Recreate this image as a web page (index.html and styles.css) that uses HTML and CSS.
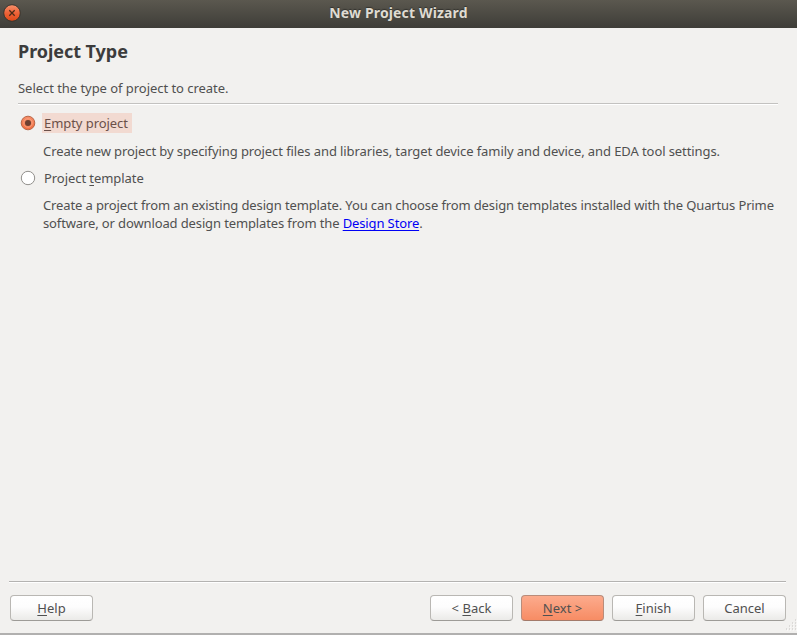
FILE: index.html
```html
<!DOCTYPE html>
<html lang="en">
<head>
<meta charset="utf-8">
<title>New Project Wizard</title>
<link rel="stylesheet" href="styles.css">
</head>
<body>
<div class="window">
  <header class="titlebar">
    <button class="close" aria-label="Close">
      <svg width="18" height="18" viewBox="0 0 18 18">
        <defs><linearGradient id="cg" x1="0" y1="0" x2="0" y2="1"><stop offset="0" stop-color="#f6916c"/><stop offset=".5" stop-color="#ed6338"/><stop offset="1" stop-color="#dc4816"/></linearGradient></defs>
        <circle cx="9" cy="9" r="8.3" fill="url(#cg)" stroke="#36352f" stroke-width="1"/>
        <path d="M6.3 6.3l5.4 5.4M11.7 6.3l-5.4 5.4" stroke="#4a2b17" stroke-width="1.3" fill="none"/>
      </svg>
    </button>
    <h1 class="caption">New Project Wizard</h1>
  </header>
  <main class="page">
    <h2 class="heading">Project Type</h2>
    <p class="intro">Select the type of project to create.</p>
    <div class="rule"></div>
    <div class="option">
      <svg class="radio" width="16" height="16" viewBox="0 0 16 16">
        <defs><linearGradient id="rg" x1="0" y1="0" x2="0" y2="1"><stop offset="0" stop-color="#f58d68"/><stop offset="1" stop-color="#f26e40"/></linearGradient></defs>
        <circle cx="8" cy="8" r="6.8" fill="url(#rg)" stroke="#b96647" stroke-width="1"/>
        <circle cx="8" cy="8" r="4.2" fill="none" stroke="#f9a98a" stroke-width=".8"/>
        <circle cx="8" cy="8" r="3" fill="#6e4031"/>
      </svg>
      <span class="label label-focus"><u>E</u>mpty project</span>
    </div>
    <p class="desc desc-empty">Create new project by specifying project files and libraries, target device family and device, and EDA tool settings.</p>
    <div class="option">
      <svg class="radio" width="16" height="16" viewBox="0 0 16 16">
        <circle cx="8" cy="8" r="6.7" fill="#fff" stroke="#92908c" stroke-width="1"/>
      </svg>
      <span class="label">Project <u>t</u>emplate</span>
    </div>
    <p class="desc desc-template">Create a project from an existing design template. You can choose from design templates installed with the Quartus Prime<br>software, or download design templates from the <a class="link">Design Store</a>.</p>
  </main>
  <footer class="footer">
    <button class="btn help"><span><u>H</u>elp</span></button>
    <button class="btn"><span>&lt; <u>B</u>ack</span></button>
    <button class="btn primary"><span><u>N</u>ext &gt;</span></button>
    <button class="btn"><span><u>F</u>inish</span></button>
    <button class="btn"><span>Cancel</span></button>
  </footer>
  <svg class="grip" width="12" height="12" viewBox="0 0 12 12"><path d="M10 1h1M7 4h1M10 4h1M4 7h1M7 7h1M10 7h1M1 10h1M4 10h1M7 10h1M10 10h1" stroke="#c5c4c2" stroke-width="1.2"/><path d="M11 2h1M8 5h1M11 5h1M5 8h1M8 8h1M11 8h1M2 11h1M5 11h1M8 11h1M11 11h1" stroke="#fff"/></svg>
</div>
</body>
</html>
```
FILE: styles.css
```css
* { box-sizing: border-box; }
body { margin: 0; font: 13px/18px "Noto Sans", sans-serif; color: #505050; }
h1, h2, p { margin: 0; }
button { font: inherit; color: inherit; padding: 0; }
u { text-decoration: underline; text-decoration-thickness: 1px; text-underline-offset: 2px; text-decoration-skip-ink: none; }

.window {
  position: relative;
  display: flex;
  flex-direction: column;
  width: 797px;
  height: 635px;
  background: #f2f1ef;
  border-bottom: 2px solid #b1b0af;
  overflow: hidden;
}

.titlebar {
  position: relative;
  display: flex;
  justify-content: center;
  height: 28px;
  background: linear-gradient(#5b584f, #3e3d38);
}
.close { position: absolute; left: 3px; top: 4px; width: 18px; height: 18px; border: 0; background: none; }
.close svg { display: block; }
.caption { font: bold 14px/26px "Noto Sans", sans-serif; letter-spacing: 0.15px; color: #dfdbd2; text-shadow: 0 -1px 1px #33322e; white-space: nowrap; }

.page { flex: 1; padding: 10px 19px 0 18px; white-space: nowrap; }
.heading { font-size: 18px; line-height: 27px; font-weight: 700; letter-spacing: -0.05px; color: #3c3c3c; }
.intro { margin-top: 14px; letter-spacing: -0.045px; }
.rule { height: 2px; margin-top: 6px; background: #c3c2c0; border-bottom: 1px solid #fff; }
.option { display: flex; align-items: center; height: 20px; margin-top: 8px; padding-left: 2px; }
.radio { margin-right: 6px; }
.label { height: 20px; padding: 1px 3px 0 2px; letter-spacing: -0.06px; }
.label-focus { width: 90px; background: #f2dad1; color: #6b5049; }
.desc { padding-left: 25px; margin-top: 9px; }
.desc-empty { letter-spacing: -0.088px; }
.desc-template { margin-top: 8px; letter-spacing: -0.124px; }
.link { color: #0000f5; text-decoration: underline; text-decoration-thickness: 1px; text-underline-offset: 2px; text-decoration-skip-ink: none; }

.footer {
  display: flex;
  gap: 8px;
  margin: 0 11px 0 9px;
  padding: 13px 0 12px 1px;
  border-top: 1px solid #b4b3b1;
  box-shadow: inset 0 1px #fff;
}
.btn {
  width: 83px;
  height: 26px;
  border: 1px solid #b9b7b3;
  border-bottom-color: #9d9b97;
  border-radius: 4px;
  background: linear-gradient(#fff, #fdfdfd 45%, #ebeae8);
}
.help { margin-right: auto; }
.primary { background: linear-gradient(#fcab8d, #f78c64); border-color: #b98c7a; border-bottom-color: #a37a6a; }
.grip { position: absolute; right: 0; bottom: 2px; }
```
